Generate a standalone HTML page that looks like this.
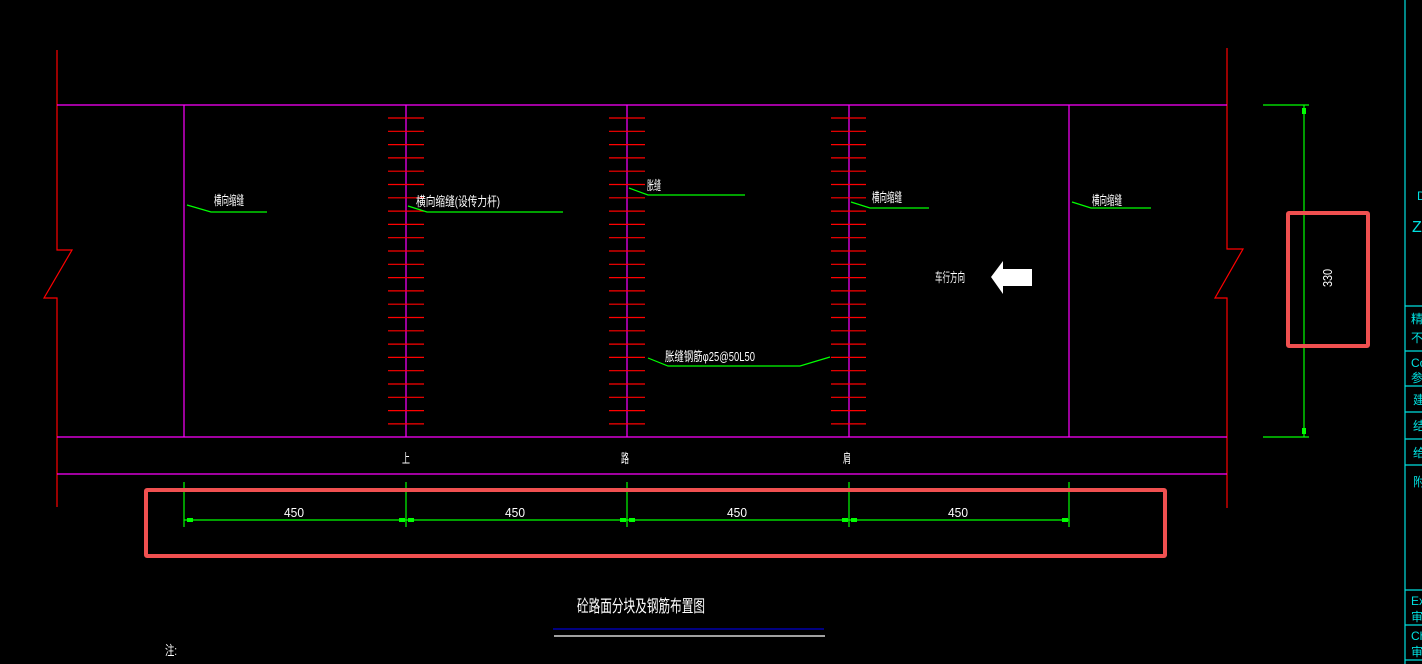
<!DOCTYPE html>
<html><head><meta charset="utf-8"><style>
html,body{margin:0;padding:0;background:#000;width:1422px;height:664px;overflow:hidden}
svg{display:block}
text{font-family:"Liberation Sans","Noto Sans CJK SC",sans-serif;fill:#fff}
</style></head><body>
<svg width="1422" height="664" viewBox="0 0 1422 664" xmlns="http://www.w3.org/2000/svg">
<rect width="1422" height="664" fill="#000"/>
<!-- red boundary with breaks -->
<g stroke="#ff0000" stroke-width="1.2" fill="none">
<polyline points="57,50 57,250 72,250 44,298 57,298 57,507"/>
<polyline points="1227,48 1227,249 1243,249 1215,298 1227,298 1227,508"/>
</g>
<!-- magenta lines -->
<g stroke="#ff00ff" stroke-width="1.2">
<line x1="57" y1="105" x2="1227" y2="105"/>
<line x1="57" y1="437" x2="1227" y2="437"/>
<line x1="57" y1="474" x2="1227" y2="474"/>
<line x1="184" y1="105" x2="184" y2="437"/>
<line x1="406" y1="105" x2="406" y2="437"/>
<line x1="627" y1="105" x2="627" y2="437"/>
<line x1="849" y1="105" x2="849" y2="437"/>
<line x1="1069" y1="105" x2="1069" y2="437"/>
</g>
<!-- ticks -->
<g stroke="#ff0000" stroke-width="1.2" id="ticks">
<script></script>
</g>
<g stroke="#ff0000" stroke-width="1.2">
<!-- generated ticks -->
<path d="M388 118h36M388 131.3h36M388 144.6h36M388 157.9h36M388 171.2h36M388 184.5h36M388 197.8h36M388 211.1h36M388 224.4h36M388 237.7h36M388 251h36M388 264.3h36M388 277.6h36M388 290.9h36M388 304.2h36M388 317.5h36M388 330.8h36M388 344.1h36M388 357.4h36M388 370.7h36M388 384h36M388 397.3h36M388 410.6h36M388 423.9h36"/>
<path d="M609 118h36M609 131.3h36M609 144.6h36M609 157.9h36M609 171.2h36M609 184.5h36M609 197.8h36M609 211.1h36M609 224.4h36M609 237.7h36M609 251h36M609 264.3h36M609 277.6h36M609 290.9h36M609 304.2h36M609 317.5h36M609 330.8h36M609 344.1h36M609 357.4h36M609 370.7h36M609 384h36M609 397.3h36M609 410.6h36M609 423.9h36"/>
<path d="M831 118h35M831 131.3h35M831 144.6h35M831 157.9h35M831 171.2h35M831 184.5h35M831 197.8h35M831 211.1h35M831 224.4h35M831 237.7h35M831 251h35M831 264.3h35M831 277.6h35M831 290.9h35M831 304.2h35M831 317.5h35M831 330.8h35M831 344.1h35M831 357.4h35M831 370.7h35M831 384h35M831 397.3h35M831 410.6h35M831 423.9h35"/>
</g>
<!-- leaders -->
<g stroke="#00ff00" stroke-width="1.2" fill="none">
<polyline points="187,205 211,212 267,212"/>
<polyline points="408,206 427,212 563,212"/>
<polyline points="629,188 648,195 745,195"/>
<polyline points="851,202 870,208 929,208"/>
<polyline points="1072,202 1091,208 1151,208"/>
<polyline points="648,358 668,366 800,366 830,357"/>
</g>
<!-- labels -->
<g font-size="13">
<text x="214" y="205" textLength="30" lengthAdjust="spacingAndGlyphs">横向缩缝</text>
<text x="416" y="206" textLength="84" lengthAdjust="spacingAndGlyphs">横向缩缝(设传力杆)</text>
<text x="647" y="190" textLength="14" lengthAdjust="spacingAndGlyphs">胀缝</text>
<text x="872" y="202" textLength="30" lengthAdjust="spacingAndGlyphs">横向缩缝</text>
<text x="1092" y="205" textLength="30" lengthAdjust="spacingAndGlyphs">横向缩缝</text>
<text x="665" y="361" textLength="90" lengthAdjust="spacingAndGlyphs">胀缝钢筋φ25@50L50</text>
<text x="935" y="282" textLength="30" lengthAdjust="spacingAndGlyphs">车行方向</text>
<text x="402" y="463" textLength="8" lengthAdjust="spacingAndGlyphs">上</text>
<text x="621" y="463" textLength="8" lengthAdjust="spacingAndGlyphs">路</text>
<text x="843" y="463" textLength="8" lengthAdjust="spacingAndGlyphs">肩</text>
<text x="165" y="655" textLength="12" lengthAdjust="spacingAndGlyphs">注:</text>
</g>
<polygon points="991,277 1003,261 1003,269 1032,269 1032,286 1003,286 1003,294" fill="#fff"/>
<!-- horizontal dimension -->
<g stroke="#00ff00" stroke-width="1.2">
<line x1="184" y1="520" x2="1069" y2="520"/>
<line x1="184" y1="482" x2="184" y2="527"/>
<line x1="406" y1="482" x2="406" y2="527"/>
<line x1="627" y1="482" x2="627" y2="527"/>
<line x1="849" y1="482" x2="849" y2="527"/>
<line x1="1069" y1="482" x2="1069" y2="527"/>
<line x1="1304" y1="105" x2="1304" y2="437"/>
<line x1="1263" y1="105" x2="1309" y2="105"/>
<line x1="1263" y1="437" x2="1309" y2="437"/>
</g>
<g fill="#00ff00">
<rect x="187" y="518" width="6" height="4"/><rect x="399" y="518" width="6" height="4"/>
<rect x="408" y="518" width="6" height="4"/><rect x="620" y="518" width="6" height="4"/>
<rect x="629" y="518" width="6" height="4"/><rect x="842" y="518" width="6" height="4"/>
<rect x="851" y="518" width="6" height="4"/><rect x="1062" y="518" width="6" height="4"/>
<rect x="1302" y="108" width="4" height="6"/><rect x="1302" y="428" width="4" height="6"/>
</g>
<g font-size="13">
<text x="284" y="517" textLength="20" lengthAdjust="spacingAndGlyphs">450</text>
<text x="505" y="517" textLength="20" lengthAdjust="spacingAndGlyphs">450</text>
<text x="727" y="517" textLength="20" lengthAdjust="spacingAndGlyphs">450</text>
<text x="948" y="517" textLength="20" lengthAdjust="spacingAndGlyphs">450</text>
<text transform="translate(1332,287) rotate(-90)" font-size="13" textLength="18" lengthAdjust="spacingAndGlyphs">330</text>
</g>
<!-- highlight boxes -->
<rect x="146" y="490" width="1019" height="66" fill="none" stroke="#f05050" stroke-width="4" rx="1"/>
<rect x="1288" y="213" width="80" height="133" fill="none" stroke="#f05050" stroke-width="4" rx="1"/>
<!-- title -->
<text x="577" y="612" font-size="17" textLength="128" lengthAdjust="spacingAndGlyphs">砼路面分块及钢筋布置图</text>
<line x1="553" y1="629" x2="824" y2="629" stroke="#0000cc" stroke-width="1.2"/>
<line x1="554" y1="636" x2="825" y2="636" stroke="#fff" stroke-width="1.2"/>
<!-- right panel -->
<g stroke="#00e0e0" stroke-width="1.2">
<line x1="1405" y1="0" x2="1405" y2="664"/>
<line x1="1405" y1="306" x2="1422" y2="306"/>
<line x1="1405" y1="351" x2="1422" y2="351"/>
<line x1="1405" y1="386" x2="1422" y2="386"/>
<line x1="1405" y1="412" x2="1422" y2="412"/>
<line x1="1405" y1="439" x2="1422" y2="439"/>
<line x1="1405" y1="465" x2="1422" y2="465"/>
<line x1="1405" y1="590" x2="1422" y2="590"/>
<line x1="1405" y1="625" x2="1422" y2="625"/>
<line x1="1405" y1="660" x2="1422" y2="660"/>
</g>
<g font-size="12" style="fill:#00e0e0">
<text x="1417" y="200" style="fill:#00e0e0">D</text>
<text x="1412" y="232" font-size="16" style="fill:#00e0e0">ZI</text>
<text x="1411" y="323" style="fill:#00e0e0">精</text>
<text x="1411" y="342" style="fill:#00e0e0">不</text>
<text x="1411" y="367" style="fill:#00e0e0">Co</text>
<text x="1411" y="382" style="fill:#00e0e0">参</text>
<text x="1413" y="404" style="fill:#00e0e0">建</text>
<text x="1413" y="430" style="fill:#00e0e0">结</text>
<text x="1413" y="457" style="fill:#00e0e0">给</text>
<text x="1413" y="486" style="fill:#00e0e0">附</text>
<text x="1411" y="605" style="fill:#00e0e0">Ex</text>
<text x="1411" y="621" style="fill:#00e0e0">审</text>
<text x="1411" y="640" style="fill:#00e0e0">Ch</text>
<text x="1411" y="656" style="fill:#00e0e0">审</text>
</g>
</svg>
</body></html>
